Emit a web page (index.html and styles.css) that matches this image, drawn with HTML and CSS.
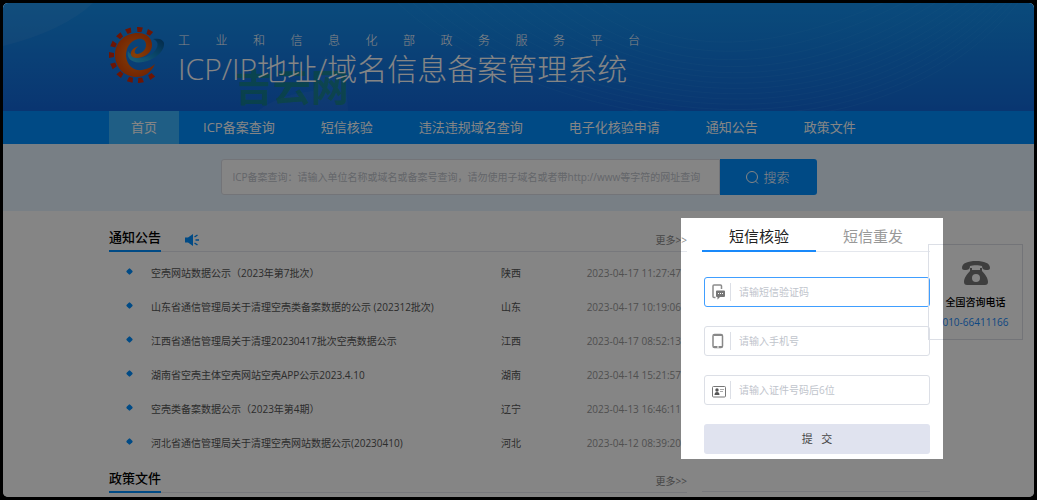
FILE: index.html
```html
<!DOCTYPE html>
<html lang="zh-CN">
<head>
    <meta charset="UTF-8">
    <meta name="viewport" content="width=device-width, initial-scale=1.0">
    <title>ICP/IP地址/域名信息备案管理系统</title>
    <link rel="stylesheet" href="styles.css">
</head>
<body>

<div class="page">
    <header class="header">
        <svg class="header-bg" viewBox="0 0 1031 108" preserveAspectRatio="none" aria-hidden="true">
            <path d="M0 0H90Q60 28 0 43Z" fill="#fff" fill-opacity=".06"/>
            <path d="M45 0H385Q440 42 560 75L700 108H1031V0Z" fill="#1aa0f0" fill-opacity=".05"/>
            <path d="M255 108Q275 92 310 88L322 53Q344 65 345 108Z" fill="#fff" fill-opacity=".04"/>
            <g fill="none" stroke="#5cc4ff" stroke-opacity=".1">
                <path d="M395 0C520 118 860 190 1015 0"/>
                <path d="M410 0C530 112 850 182 1009 0"/>
                <path d="M425 0C540 106 840 174 1003 0"/>
                <path d="M440 0C550 100 830 166 997 0"/>
                <path d="M455 0C560 94 820 158 990 0"/>
                <path d="M470 0C570 88 810 150 983 0"/>
                <path d="M485 0C580 82 800 142 975 0"/>
                <path d="M500 0C590 76 790 134 966 0"/>
                <path d="M515 0C600 70 780 126 956 0"/>
                <path d="M530 0C610 64 770 118 945 0"/>
                <path d="M545 0C620 58 760 108 932 0"/>
                <path d="M560 0C630 52 750 96 918 0"/>
                <path d="M580 0C640 44 740 82 900 0"/>
                <path d="M600 0C650 36 730 66 880 0"/>
            </g>
        </svg>
        <span class="watermark">吉云网</span>
        <div class="container brand">
            <svg class="logo" viewBox="0 0 56 56" aria-hidden="true">
                <defs>
                    <linearGradient id="swoosh" x1="0" y1="1" x2="1" y2="0">
                        <stop offset="0" stop-color="#35c0ee"/>
                        <stop offset=".5" stop-color="#1289cc"/>
                        <stop offset="1" stop-color="#06508f"/>
                    </linearGradient>
                    <radialGradient id="orange">
                        <stop offset="0" stop-color="#ff7a10"/>
                        <stop offset="1" stop-color="#e04a05"/>
                    </radialGradient>
                </defs>
                <path d="M19 24C17 32 24 37 34 35C46 33 56 24 55 16C54 12 49 11 44 12C50 14 50 20 44 26C38 31 26 34 19 24Z" fill="url(#swoosh)"/>
                <g fill="#d02a08">
                    <path d="M23-2V2L28 3V-3Z" transform="translate(28 28) rotate(-61)"/>
                    <path d="M23-2V2L28 3V-3Z" transform="translate(28 28) rotate(-84)"/>
                    <path d="M23-2V2L28 3V-3Z" transform="translate(28 28) rotate(-109)"/>
                    <path d="M23-2V2L28 3V-3Z" transform="translate(28 28) rotate(-132)"/>
                    <path d="M23-2V2L28 3V-3Z" transform="translate(28 28) rotate(-156)"/>
                    <path d="M23-2V2L28 3V-3Z" transform="translate(28 28) rotate(-180)"/>
                    <path d="M23-2V2L28 3V-3Z" transform="translate(28 28) rotate(-204)"/>
                    <path d="M23-2V2L28 3V-3Z" transform="translate(28 28) rotate(-229)"/>
                    <path d="M23-2V2L28 3V-3Z" transform="translate(28 28) rotate(-255)"/>
                    <path d="M23-2V2L28 3V-3Z" transform="translate(28 28) rotate(-278)"/>
                    <path d="M23-2V2L28 3V-3Z" transform="translate(28 28) rotate(-304)"/>
                </g>
                <path d="M46 37C42 46 35 50 28 50C15 50 6 40 6 28C6 15 16 6 29 6C38 6 43 11 43 18C43 26 35 31 28 31C23 31 21 28 22 25C23 22 26 20 30 19C27 21 25 24 26 26C28 29 37 25 37 18C37 13 33 11 29 12C20 14 17 22 17 29C18 39 25 44 33 43C39 42 43 40 46 37Z" fill="url(#orange)"/>
            </svg>
            <div class="brand-text">
                <p class="subtitle">工业和信息化部政务服务平台</p>
                <h1 class="title">ICP/IP地址/域名信息备案管理系统</h1>
            </div>
        </div>
    </header>

    <nav class="nav">
        <div class="container nav-list">
            <a class="nav-item active" href="#">首页</a>
            <a class="nav-item" href="#">ICP备案查询</a>
            <a class="nav-item" href="#">短信核验</a>
            <a class="nav-item" href="#">违法违规域名查询</a>
            <a class="nav-item" href="#">电子化核验申请</a>
            <a class="nav-item" href="#">通知公告</a>
            <a class="nav-item" href="#">政策文件</a>
        </div>
    </nav>

    <div class="search-band">
        <form class="search">
            <input class="search-input" type="text" aria-label="ICP备案查询" placeholder="ICP备案查询：请输入单位名称或域名或备案号查询，请勿使用子域名或者带http://www等字符的网址查询">
            <button class="search-btn" type="button">
                <svg width="13" height="13" viewBox="0 0 13 13" fill="none" stroke="#fff" aria-hidden="true">
                    <circle cx="6" cy="6" r="5.500"/>
                    <path d="M9.500 10L12 12.500"/>
                </svg>
                搜索
            </button>
        </form>
    </div>

    <main class="container content">
        <div class="left">
            <div class="section-head">
                <h2>通知公告</h2>
                <svg class="horn" width="14" height="12" viewBox="0 0 14 12" aria-hidden="true">
                    <path d="M0 3.500H3L8 0V12L3 8.500H0Z" fill="#008eff"/>
                    <path d="M9.500 3L12.500 1M10.500 6H14M9.500 9L12.500 11" stroke="#008eff" stroke-width="1.500"/>
                </svg>
                <a class="more" href="#">更多&gt;&gt;</a>
            </div>
            <table class="notices">
                <tr><td class="dot"></td><td><a href="#">空壳网站数据公示（2023年第7批次）</a></td><td class="area">陕西</td><td class="date">2023-04-17 11:27:47</td></tr>
                <tr><td class="dot"></td><td><a href="#">山东省通信管理局关于清理空壳类备案数据的公示 (202312批次)</a></td><td class="area">山东</td><td class="date">2023-04-17 10:19:06</td></tr>
                <tr><td class="dot"></td><td><a href="#">江西省通信管理局关于清理20230417批次空壳数据公示</a></td><td class="area">江西</td><td class="date">2023-04-17 08:52:13</td></tr>
                <tr><td class="dot"></td><td><a href="#">湖南省空壳主体空壳网站空壳APP公示2023.4.10</a></td><td class="area">湖南</td><td class="date">2023-04-14 15:21:57</td></tr>
                <tr><td class="dot"></td><td><a href="#">空壳类备案数据公示（2023年第4期）</a></td><td class="area">辽宁</td><td class="date">2023-04-13 16:46:11</td></tr>
                <tr><td class="dot"></td><td><a href="#">河北省通信管理局关于清理空壳网站数据公示(20230410)</a></td><td class="area">河北</td><td class="date">2023-04-12 08:39:20</td></tr>
            </table>
            <div class="section-head">
                <h2>政策文件</h2>
                <a class="more" href="#">更多&gt;&gt;</a>
            </div>
        </div>

        <div class="right">
            <section class="verify">
                <div class="tabs">
                    <button class="tab active" type="button">短信核验</button>
                    <button class="tab" type="button">短信重发</button>
                </div>
                <form class="verify-form">
                    <label class="field focused">
                        <svg width="14" height="16" viewBox="0 0 14 16" aria-hidden="true">
                            <path d="M3.500 13.500H2Q1 13.500 1 12.500V2Q1 1 2 1H8.500Q9.500 1 9.500 2V5" fill="none" stroke="#8c8c8c" stroke-width="1.500"/>
                            <path d="M5 6.500H12Q13 6.500 13 7.500V12Q13 13 12 13H8L5.500 15.500V13H5Q4 13 4 12V7.500Q4 6.500 5 6.500Z" fill="#777"/>
                            <path d="M6 9.500H7M8 9.500H9M10 9.500H11" stroke="#fff"/>
                        </svg>
                        <input type="text" aria-label="短信验证码" placeholder="请输短信验证码">
                    </label>
                    <label class="field">
                        <svg width="14" height="16" viewBox="0 0 14 16" aria-hidden="true">
                            <rect x="1" y="1.500" width="9.500" height="13" rx="1.500" fill="none" stroke="#888" stroke-width="1.500"/>
                            <path d="M2 2H10M2 14H10" stroke="#888" stroke-width="2"/>
                            <path d="M5 14H7" stroke="#fff"/>
                        </svg>
                        <input type="tel" aria-label="手机号" placeholder="请输入手机号">
                    </label>
                    <label class="field">
                        <svg width="14" height="16" viewBox="0 0 14 16" aria-hidden="true">
                            <rect x=".5" y="4.500" width="13" height="10.500" rx="1" fill="none" stroke="#777"/>
                            <circle cx="5" cy="8" r="1.700" fill="#555"/>
                            <path d="M2.500 13Q2.500 10 5 10T7.500 13Z" fill="#555"/>
                            <path d="M8 7.500H12M8 9.500H11" stroke="#aaa"/>
                        </svg>
                        <input type="text" aria-label="证件号码后6位" placeholder="请输入证件号码后6位">
                    </label>
                    <button class="submit" type="button">提&nbsp;&nbsp;&nbsp;交</button>
                </form>
                <div class="spotlight"></div>
            </section>
            <div class="side-head"></div>
        </div>
    </main>

    <aside class="hotline">
        <svg width="30" height="26" viewBox="0 0 30 26" aria-hidden="true">
            <path d="M1 8C1 3 7 1 15 1S29 3 29 8C29 10 27 10 25 10S21 9 21 6C18 5 12 5 9 6C9 9 7 10 5 10S1 10 1 8Z" fill="#777"/>
            <path d="M11 8V10H19V8H21V11C24 14 27 18 27 22Q27 25 24 25H6Q3 25 3 22C3 18 6 14 9 11V8Z" fill="#777"/>
            <circle cx="15" cy="18" r="4" fill="#fff"/>
        </svg>
        <p class="hotline-name">全国咨询电话</p>
        <p class="hotline-number">010-66411166</p>
    </aside>
</div>

</body>
</html>
```
FILE: styles.css
```css
* {
    box-sizing: border-box;
}
body {
    margin: 0;
    padding: 3px;
    background: #000;
    color: #333;
    font-family: "Open Sans", "Noto Sans CJK SC", sans-serif;
    font-size: 10px;
    line-height: 16px;
}
h1, h2, p {
    margin: 0;
    font-weight: normal;
}
a {
    color: inherit;
    text-decoration: none;
}
button, input {
    font: inherit;
    border: none;
    padding: 0;
}
button {
    cursor: pointer;
}
.page {
    position: relative;
    min-height: calc(100vh - 6px);
    overflow: hidden;
    background: #fff;
    border-radius: 5px;
}
.container {
    width: 80%;
    max-width: 823px;
    margin: 0 auto;
    padding-left: 2px;
}

/* header */
.header {
    position: relative;
    height: 108px;
    background: linear-gradient(#1590ed, #1366d8);
}
.header-bg {
    position: absolute;
    width: 100%;
    height: 100%;
}
.watermark {
    position: absolute;
    left: 232px;
    top: 63px;
    font-size: 38px;
    line-height: 40px;
    font-weight: bold;
    color: rgba(20, 150, 60, 0.45);
}
.brand {
    position: relative;
    display: flex;
    gap: 13px;
    padding-top: 24px;
}
.logo {
    width: 56px;
    height: 56px;
}
.brand-text {
    color: #fff;
}
.subtitle {
    width: 462px;
    padding-top: 6px;
    font-size: 12px;
    font-weight: 300;
    text-align: justify;
    text-align-last: justify;
}
.title {
    font-size: 30px;
    line-height: 40px;
    font-weight: 200;
    white-space: nowrap;
}

/* nav */
.nav {
    background: #008eff;
}
.nav-list {
    display: flex;
    gap: 2px;
    font-size: 13px;
    line-height: 33px;
    color: #fff;
}
.nav-item {
    padding: 0 22px;
    white-space: nowrap;
}
.nav-item.active {
    background: #3cb5ff;
}

/* search */
.search-band {
    padding: 15px 0 16px;
    background: #e6f3ff;
}
.search {
    display: flex;
    width: 58%;
    max-width: 596px;
    min-width: 400px;
    margin: 0 auto;
}
.search-input {
    flex: 1;
    padding: 0 11px;
    border: 1px solid #dcdfe6;
    border-radius: 3px 0 0 3px;
    background: #fff;
}
input::placeholder {
    color: #c0c4cc;
    opacity: 1;
}
.search-btn {
    display: flex;
    align-items: center;
    justify-content: center;
    gap: 4px;
    width: 97px;
    height: 36px;
    border-radius: 0 3px 3px 0;
    background: #008eff;
    color: #fff;
    font-size: 13px;
    font-weight: 300;
}

/* content */
.content {
    display: flex;
    gap: 15px;
    padding-top: 16px;
    padding-bottom: 4px;
}
.left {
    flex: 1;
}
.right {
    width: 228px;
}
.section-head {
    display: flex;
    align-items: center;
    height: 25px;
    border-bottom: 1px solid #e4e7ed;
}
.section-head h2 {
    height: 25px;
    border-bottom: 2px solid #008eff;
    color: #000;
    font-size: 13px;
    line-height: 20px;
    font-weight: 500;
}
.horn {
    margin: 2px 0 0 24px;
}
.more {
    margin-left: auto;
    padding-top: 2px;
    color: #888;
}
.notices {
    width: 100%;
    margin: 4px 0 8px;
    border-collapse: collapse;
    table-layout: fixed;
}
.notices td {
    height: 34px;
    padding: 0;
    color: #555;
    white-space: nowrap;
}
.notices .dot {
    width: 42px;
    padding-left: 18px;
}
.dot::before {
    content: "";
    display: block;
    width: 5px;
    height: 5px;
    margin-bottom: 3px;
    border-radius: 1px;
    background: #008eff;
    transform: rotate(45deg);
}
.notices .area {
    width: 78px;
}
.notices .date {
    width: 108px;
    padding-right: 6px;
    color: #999;
    text-align: right;
}

/* sms form */
.verify {
    position: relative;
}
.tabs {
    display: flex;
    height: 25px;
    border-bottom: 1px solid #e4e7ed;
}
.tab {
    flex: 1;
    height: 25px;
    padding-bottom: 5px;
    border-bottom: 2px solid transparent;
    background: none;
    color: #999;
    font-size: 15px;
    line-height: 18px;
}
.tab.active {
    border-color: #1989fa;
    color: #222;
}
.verify-form {
    display: flex;
    flex-direction: column;
    gap: 19px;
    padding: 25px 0 0 2px;
}
.field {
    display: flex;
    align-items: center;
    gap: 4px;
    height: 30px;
    padding: 0 7px;
    border: 1px solid #dcdfe6;
    border-radius: 3px;
}
.field.focused {
    border-color: #409eff;
}
.field input {
    flex: 1;
    min-width: 0;
    height: 18px;
    padding-left: 8px;
    border-left: 1px solid #dcdfe6;
    background: none;
    outline: none;
}
.submit {
    height: 30px;
    border-radius: 3px;
    background: #e0e3ef;
    color: #444;
    font-size: 11px;
}
.side-head {
    margin-top: 13px;
    height: 25px;
    border-bottom: 1px solid #e4e7ed;
}

/* dims everything except the sms form */
.spotlight {
    position: absolute;
    z-index: 10;
    top: -9px;
    right: -13px;
    bottom: -5px;
    left: -21px;
    box-shadow: 0 0 0 2000px rgba(0, 0, 0, 0.48);
    pointer-events: none;
}

/* hotline card */
.hotline {
    position: absolute;
    top: 241px;
    right: 11px;
    width: 95px;
    height: 96px;
    padding-top: 15px;
    border: 1px solid #dcdfe6;
    text-align: center;
}
.hotline svg {
    display: block;
    margin: 0 auto 8px;
}
.hotline-name {
    color: #000;
    font-weight: 500;
}
.hotline-number {
    margin-top: 4px;
    color: #1989fa;
}
```
